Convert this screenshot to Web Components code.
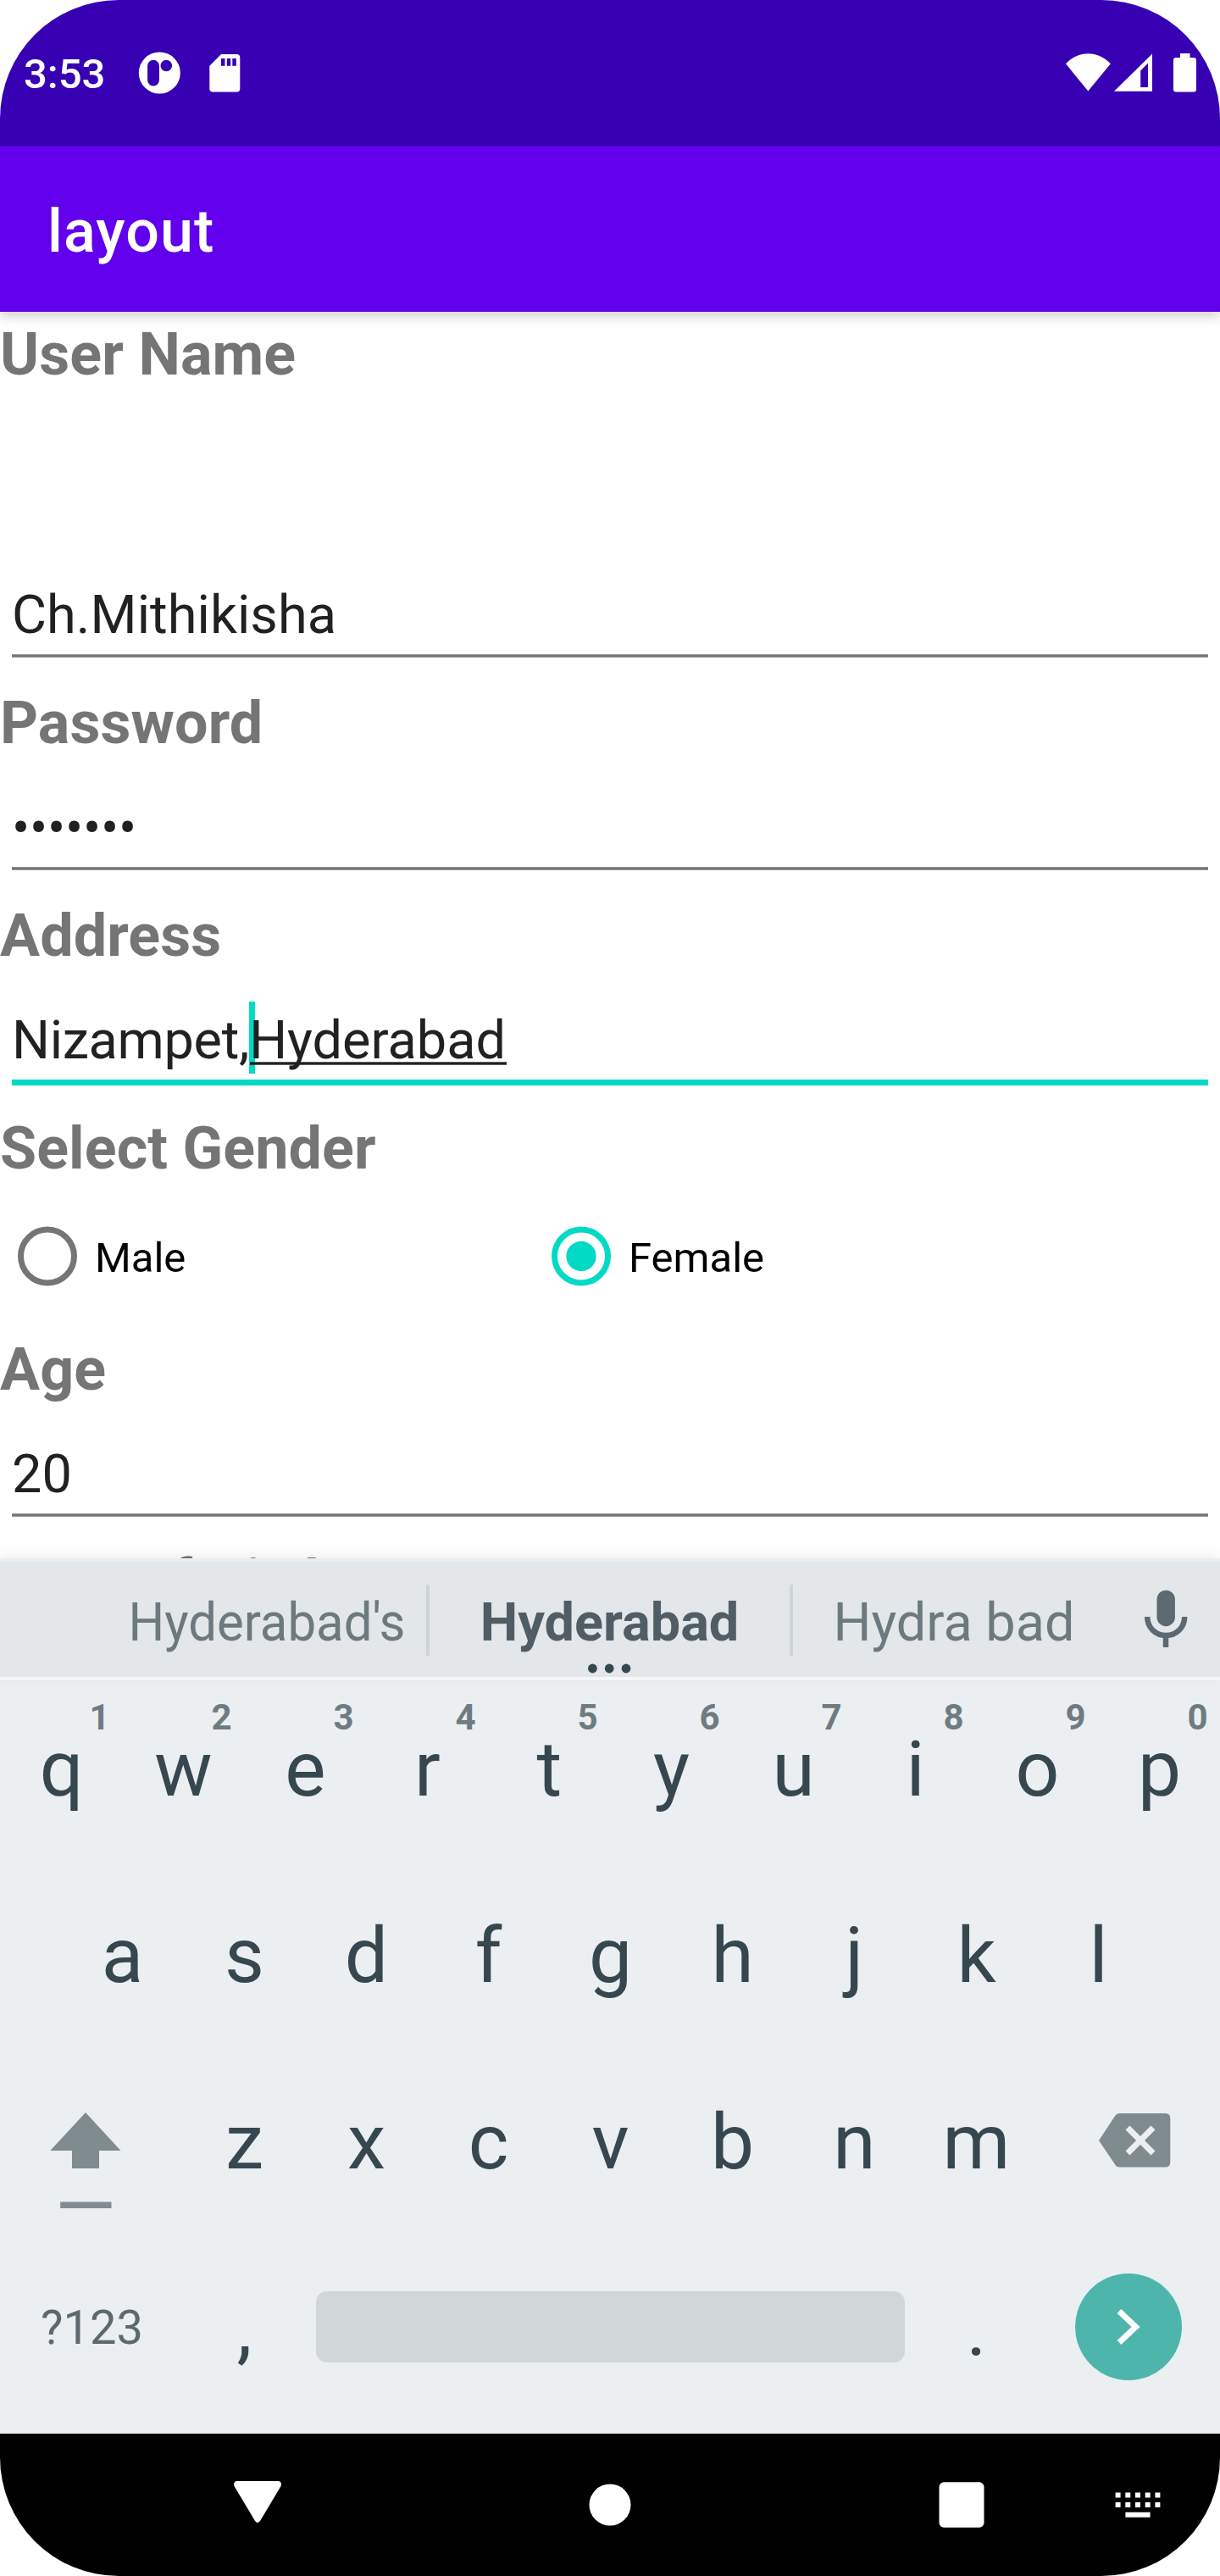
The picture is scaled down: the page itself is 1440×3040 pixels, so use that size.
<!DOCTYPE html>
<html lang="en">
<head>
<meta charset="utf-8">
<title>layout</title>
<style>
html,body{margin:0;padding:0;background:#fff}
body{font-family:Roboto,"Liberation Sans",sans-serif}
</style>
</head>
<body>
<phone-screen>
  <status-bar slot="top" time="3:53"></status-bar>
  <app-bar slot="top">layout</app-bar>
  <form-label>User Name</form-label>
  <text-entry spaced>Ch.Mithikisha</text-entry>
  <form-label>Password</form-label>
  <text-entry masked>•••••••</text-entry>
  <form-label>Address</form-label>
  <text-entry focused>Nizampet,<composing-text>Hyderabad</composing-text></text-entry>
  <form-label>Select Gender</form-label>
  <radio-group>
    <radio-option>Male</radio-option>
    <radio-option checked>Female</radio-option>
  </radio-group>
  <form-label>Age</form-label>
  <text-entry>20</text-entry>
  <form-label clipped>Date of Birth</form-label>
  <soft-keyboard slot="bottom"></soft-keyboard>
  <nav-bar slot="bottom"></nav-bar>
</phone-screen>
<script>
function define(name, html, setup) {
  const tpl = document.createElement('template');
  tpl.innerHTML = html;
  customElements.define(name, class extends HTMLElement {
    constructor() {
      super();
      this.attachShadow({mode: 'open'}).appendChild(tpl.content.cloneNode(true));
    }
    connectedCallback() { if (setup) setup(this, this.shadowRoot); }
  });
}

define('phone-screen', `<style>
:host{display:flex;flex-direction:column;width:1440px;height:3040px;border-radius:140px;overflow:hidden;background:#fff}
header{flex:none;position:relative;z-index:1}
main{flex:none;height:1471px;overflow:hidden;display:flex;flex-direction:column}
footer{flex:none;position:relative}
</style><header><slot name="top"></slot></header><main><slot></slot></main><footer><slot name="bottom"></slot></footer>`);

define('status-bar', `<style>
:host{display:flex;align-items:center;justify-content:space-between;height:172px;background:#3700b3;color:#fff;box-sizing:border-box}
span{font-size:49px;font-weight:500;line-height:58px;padding:4px 0 0 28px;width:132px;display:block}
.l{display:flex;align-items:center;height:172px}
svg{display:block;flex:none}
</style><div class="l"><span></span>
<svg width="130" height="172" viewBox="160 0 130 172" fill="#fff"><path fill-rule="evenodd" d="M188.300 61.500a24.500 24.500 0 1 1 0 49a24.500 24.500 0 1 1 0-49zM181 70.800a6.900 6.900 0 0 0-6.900 6.900v17a6.900 6.900 0 0 0 13.800 0v-17a6.900 6.900 0 0 0-6.900-6.900zM196.300 70.700a6.800 6.800 0 1 0 0 13.600a6.800 6.800 0 1 0 0-13.600z"/><path fill-rule="evenodd" d="M261 64h18.300a4 4 0 0 1 4 4v36.500a4 4 0 0 1-4 4h-28a4 4 0 0 1-4-4V77.700zM261 69v8.700h4.500V69zM267.800 69v8.700h4.400V69zM274.300 69v8.700h4.500V69z"/></svg></div>
<svg width="190" height="172" viewBox="1250 0 190 172" fill="#fff"><path d="M1284.300 107.500L1258 75.300C1273 59.200 1296 59.200 1310.800 75.300z"/><path fill-rule="evenodd" d="M1315 107.800L1360 63.500V107.800zM1346.200 83.500V103H1355V74.500z"/><path d="M1393 63h11.500v5h4.500a3 3 0 0 1 3 3v34.500a3 3 0 0 1-3 3h-21a3 3 0 0 1-3-3V71a3 3 0 0 1 3-3h5z"/></svg>`,
(el, r) => { r.querySelector('span').textContent = el.getAttribute('time'); });

define('app-bar', `<style>
:host{display:flex;align-items:center;height:196px;padding-left:56px;box-sizing:border-box;background:#6200ee;color:#fff;font-size:70px;font-weight:500;line-height:82px;letter-spacing:1.1px;box-shadow:0 5px 14px rgba(0,0,0,.2)}
div{padding-top:6px}
</style><div><slot></slot></div>`);

define('form-label', `<style>
:host{display:block;flex:none;height:94px;box-sizing:border-box;padding-top:9px;font-size:70px;font-weight:700;line-height:82px;letter-spacing:.1px;color:#757575;white-space:nowrap}
:host([clipped]){padding-top:8px}
</style><slot></slot>`);

define('text-entry', `<style>
:host{display:flex;flex:none;flex-direction:column;height:157px;box-sizing:border-box;padding:43px 14px 0;font-size:63px;line-height:74px;color:#212121}
:host([spaced]){height:341px;padding-top:227px;letter-spacing:.08px}
:host([masked]){padding-top:44px;letter-spacing:-.25px}
:host([masked]) i{margin-top:8px}
div{height:74px;white-space:pre}
i{display:block;margin-top:9px;height:4px;background:linear-gradient(#969696 1px,#757575 1px 3px,#969696 3px)}
:host([focused]){letter-spacing:-.3px}
:host([focused]) i{height:7px;background:#03dac5}
</style><div><slot></slot></div><i></i>`);

define('composing-text', `<style>
:host{display:inline-block;position:relative;height:74px;letter-spacing:0}
b{position:absolute;left:0;top:-9px;width:7px;height:85px;background:#03dac5}
u{position:absolute;left:1px;right:-1px;top:62px;height:4px;background:linear-gradient(rgba(33,33,33,.7) 1px,#212121 1px 3px,rgba(33,33,33,.7) 3px)}
span{position:relative}
</style><b></b><span><slot></slot></span><u></u>`);

define('radio-group', `<style>:host{display:flex;flex:none;height:167px}</style><slot></slot>`);

define('radio-option', `<style>
:host{display:flex;align-items:center;width:630px;font-size:49px;line-height:58px;color:#000}
svg{display:block;width:112px;height:112px}
.on{display:none}
:host([checked]) .on{display:block}
svg{color:#757575}
:host([checked]) svg{color:#03dac5}
span{padding-top:4px}
</style><svg viewBox="0 0 112 112"><circle cx="56" cy="55.500" r="31.500" fill="none" stroke="currentColor" stroke-width="7"/><circle class="on" cx="56" cy="55.500" r="17.700" fill="currentColor"/></svg><span><slot></slot></span>`);

define('suggestion-strip', `<style>
:host{display:flex;align-items:center;height:136px;background:#e3e7e9;border-top:4px solid #eceef0;border-bottom:4px solid #f5f7f9;font-size:63px;line-height:74px;color:#6c797f;box-shadow:0 -4px 14px rgba(0,0,0,.07)}
div{position:relative;display:flex;justify-content:center;white-space:nowrap;padding-top:8px}
.a{margin-left:126px;width:377px}.b{width:425px;font-weight:700;color:#505d65}.c{width:380px}
.a span{transform:scaleX(.951)}
i{width:4px;height:84px;background:#cfd4d7;margin-bottom:-2px}
.dots{position:absolute;left:182px;top:93px}
svg{display:block}
</style><div class="a"><span>Hyderabad's</span></div><i></i><div class="b">Hyderabad<svg class="dots" width="60" height="12" viewBox="690 1963 60 12" fill="#37474f"><circle cx="700.400" cy="1969" r="5.400"/><circle cx="720.200" cy="1969" r="5.400"/><circle cx="740" cy="1969" r="5.400"/></svg></div><i></i><div class="c">Hydra bad</div>
<svg width="120" height="136" viewBox="1316 1843 120 136"><rect x="1365.500" y="1876.700" width="21.400" height="42.500" rx="10.700" fill="#5c6970"/><path d="M1354.200 1908c0 13 10 22 22 22s22-9 22-22M1376 1930v14" fill="none" stroke="#5c6970" stroke-width="6.500"/></svg>`);

define('key-cap', `<style>
:host{display:block;position:relative;width:144px;box-sizing:border-box;padding:0 0 54px 1px;flex:none;text-align:center;font-size:91px;line-height:107px;color:#37474f}
em{position:absolute;left:87px;width:61px;top:-33px;font:700 42px/49px Roboto,sans-serif;color:#6e7b81}
</style><slot></slot><em></em>`,
(el, r) => { r.querySelector('em').textContent = el.getAttribute('hint') || ''; });

define('soft-keyboard', `<style>
:host{display:block;height:1033px;background:#ebeff2}
.row{display:flex;align-items:flex-end;height:220px}
.first{height:213px}
.indent{padding-left:72px}
.wide{width:216px;height:220px;flex:none}
svg{display:block}
.sym{width:216px;height:220px;box-sizing:border-box;padding-left:1px;line-height:222px;font-size:56px;text-align:center;color:#5c6a70;flex:none}
.space{width:695px;height:84px;margin:0 12px 68px 13px;border-radius:13px;background:#d1d6d9}
</style><suggestion-strip></suggestion-strip>
<div class="row first"></div>
<div class="row indent"></div>
<div class="row third"></div>
<div class="row last"><div class="sym">?123</div><key-cap>,</key-cap><div class="space"></div><key-cap>.</key-cap>
<svg class="wide" viewBox="1224 2636 216 220"><circle cx="1332" cy="2746" r="63" fill="#4db5ac"/><path d="M1321 2727.500L1340.500 2746L1321 2764.500" fill="none" stroke="#fff" stroke-width="7"/></svg></div>`,
(el, r) => {
  const keys = (s, hints = '') => [...s].map((c, i) => '<key-cap' + (hints[i] ? ' hint="' + hints[i] + '"' : '') + '>' + c + '</key-cap>').join('');
  r.querySelector('.first').innerHTML = keys('qwertyuiop', '1234567890');
  r.querySelector('.indent').innerHTML = keys('asdfghjkl');
  r.querySelector('.third').innerHTML =
    '<svg class="wide" viewBox="0 2416 216 220" fill="#808b90"><path d="M101 2493L142.500 2538H117V2559H85V2538H59.300zM71.200 2598.500H131.500V2606H71.200z"/></svg>' + keys('zxcvbnm') +
    '<svg class="wide" viewBox="1224 2416 216 220"><path d="M1297 2526L1316.500 2496.500Q1318 2494 1321 2494H1375.500Q1381.300 2494 1381.300 2500V2551.600Q1381.300 2557.600 1375.500 2557.600H1321Q1318 2557.600 1316.500 2555z" fill="#808b90"/><path d="M1331 2511L1361 2541M1361 2511L1331 2541" stroke="#ebeff2" stroke-width="7"/></svg>';
});

define('nav-bar', `<style>
:host{display:block;height:168px;background:#000}
svg{display:block}
</style><svg width="1440" height="168" viewBox="0 2872 1440 168" fill="#fff"><path d="M279 2928H329Q333 2929 331.500 2934L307 2975Q304 2979 301 2975L276.500 2934Q275 2929 279 2928z"/><circle cx="720" cy="2956" r="24.500"/><rect x="1108.500" y="2929.300" width="53" height="53.400" rx="5.500"/><g id="k"></g><path d="M1328.400 2964.700h29.200v6h-29.200z"/></svg>`,
(el, r) => {
  let d = '';
  for (const y of [2941.4, 2953]) for (let i = 0; i < 5; i++) d += `M${(1316.6 + i * 11.7).toFixed(1)} ${y}h6v6h-6z`;
  const p = document.createElementNS('http://www.w3.org/2000/svg', 'path');
  p.setAttribute('d', d);
  r.querySelector('#k').appendChild(p);
});
</script>
</body>
</html>
